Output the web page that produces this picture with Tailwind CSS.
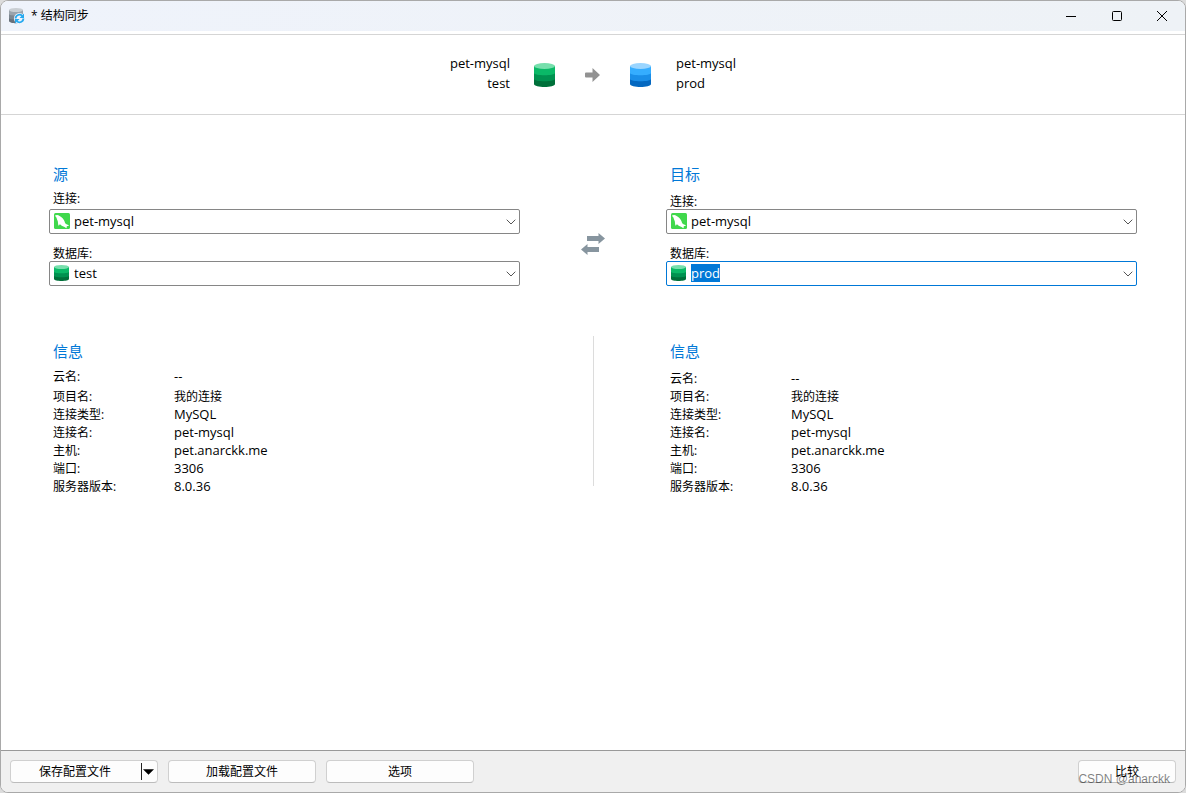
<!DOCTYPE html>
<html lang="zh-CN">
<head>
<meta charset="utf-8">
<title>结构同步</title>
<script src="https://cdn.jsdelivr.net/npm/@tailwindcss/browser@4"></script>
</head>
<body class="bg-[#dcdcdc] font-['Open_Sans','Noto_Sans_CJK_SC',sans-serif] text-[12px] leading-4 text-black">
<svg class="hidden" aria-hidden="true">
  <defs>
    <symbol id="db-green" viewBox="0 0 22 24" preserveAspectRatio="none">
      <path fill="#00703a" d="M0 16v5c0 4 22 4 22 0v-5z"/>
      <path fill="#009250" d="M0 10v6c0 3 22 3 22 0v-6z"/>
      <path fill="#0ab967" d="M0 3v7c0 3 22 3 22 0V3z"/>
      <ellipse fill="#76dfac" cx="11" cy="3" rx="11" ry="3"/>
    </symbol>
    <symbol id="db-blue" viewBox="0 0 22 24" preserveAspectRatio="none">
      <path fill="#0468c0" d="M0 16v5c0 4 22 4 22 0v-5z"/>
      <path fill="#1a8ee8" d="M0 10v6c0 3 22 3 22 0v-6z"/>
      <path fill="#35adff" d="M0 3v7c0 3 22 3 22 0V3z"/>
      <ellipse fill="#9ad5ff" cx="11" cy="3" rx="11" ry="3"/>
    </symbol>
    <symbol id="dolphin" viewBox="0 0 16 16">
      <rect width="16" height="16" rx="1.5" fill="#40d84c"/>
      <path fill="#fff" d="M1 2.6C2.200 1.600 4.200 1.700 5.600 2.900C7.800 4 9.800 6 10.500 8.200C10.900 9.800 11.500 10.600 12.400 11.300C13.500 11.800 14.800 12.200 15 12.800C14 13.100 13.300 13 12.700 13.200C13 13.800 12.800 14.500 12.300 15.200C11.200 14.400 10 13.600 8.800 13.200C7.400 12.800 6.500 12 6 11C5.600 11.800 5.200 12.400 4.600 12.800C4 11.200 4 9.600 3.800 8.200C3 6.800 2.800 5.600 2.400 4.600C1.800 4 1.200 3.400 1 2.600Z"/>
    </symbol>
    <symbol id="chevron" viewBox="0 0 10 6">
      <path fill="none" stroke="#555" stroke-width="1" d="M.7.7 5 5 9.300.7"/>
    </symbol>
  </defs>
</svg>

<div class="relative flex min-h-screen flex-col overflow-hidden rounded-lg border border-[#a9a9a9] bg-white">
  <header class="flex h-[30px] shrink-0 items-center bg-linear-to-r from-[#eff3fb] to-[#eef2f6] pl-2">
    <svg class="size-4" viewBox="0 0 16 16" aria-hidden="true">
      <path fill="#68717b" d="M0 9v4c0 3 14 3 14 0V9z"/>
      <path fill="#7d8791" d="M0 6v4c0 2 14 2 14 0V6z"/>
      <path fill="#9aa3ac" d="M0 2v4c0 2 14 2 14 0V2z"/>
      <ellipse fill="#c9ced3" cx="7" cy="2" rx="7" ry="2"/>
      <circle fill="#eff3fb" cx="10.500" cy="10.500" r="5.500"/>
      <path fill="none" stroke="#25a9ef" stroke-width="1.800" d="M6.600 10.500a3.900 3.900 0 0 1 6.600-2.700M14.400 10.500a3.900 3.900 0 0 1-6.600 2.700"/>
      <path fill="#25a9ef" d="M15 5.500v4.500h-4.500zM6 15.500v-4.500h4.500z"/>
    </svg>
    <h1 class="ml-[6px] flex-1">* 结构同步</h1>
    <button class="flex h-[30px] w-[46px] items-center justify-center" aria-label="最小化"><svg class="size-[10px]" viewBox="0 0 10 10"><path stroke="#000" d="M0 5.500h10"/></svg></button>
    <button class="flex h-[30px] w-[45px] items-center justify-center" aria-label="最大化"><svg class="size-[10px]" viewBox="0 0 10 10"><rect x=".5" y=".5" width="9" height="9" rx="1" fill="none" stroke="#000"/></svg></button>
    <button class="flex h-[30px] w-[46px] items-center justify-center" aria-label="关闭"><svg class="size-[10px]" viewBox="0 0 10 10"><path stroke="#000" d="M0 0l10 10M10 0 0 10"/></svg></button>
  </header>

  <section class="mt-[3px] grid h-[81px] shrink-0 grid-cols-[1fr_166px_1fr] items-center border-y border-[#d5d5d5] text-[13px] leading-5">
    <div class="pb-[3px] text-right"><p>pet-mysql</p><p>test</p></div>
    <div class="flex items-center justify-between pr-[25px] pl-6">
      <svg class="h-6 w-[21px]" aria-hidden="true"><use href="#db-green"/></svg>
      <svg class="h-[14px] w-[15px]" viewBox="0 0 15 14" aria-hidden="true"><path fill="#929292" d="M1 4.500h6.500V0L15 7l-7.500 7V9.500H1q-1 0-1-1v-3q0-1 1-1z"/></svg>
      <svg class="h-6 w-[21px]" aria-hidden="true"><use href="#db-blue"/></svg>
    </div>
    <div class="pb-[3px]"><p>pet-mysql</p><p>prod</p></div>
  </section>

  <main class="flex-1 px-12 pt-[47px]">
    <div class="grid grid-cols-[1fr_146px_1fr]">
      <section>
        <h2 class="ml-1 text-[15px] leading-6 text-[#0078d7]">源</h2>
        <label for="src-conn" class="mt-[5px] mb-[2px] ml-1 block">连接:</label>
        <div class="relative">
          <select id="src-conn" class="block h-[25px] w-full appearance-none rounded-xs border border-[#868686] bg-white pb-[2px] pl-6 text-[13px] outline-none"><option>pet-mysql</option></select>
          <svg class="pointer-events-none absolute top-1 left-[5px] size-4"><use href="#dolphin"/></svg>
          <svg class="pointer-events-none absolute top-[10px] right-1 h-[6px] w-[10px]"><use href="#chevron"/></svg>
        </div>
        <label for="src-db" class="mt-3 -mb-px ml-1 block">数据库:</label>
        <div class="relative">
          <input id="src-db" value="test" class="block h-[25px] w-full rounded-xs border border-[#868686] bg-white pb-[2px] pl-6 text-[13px] outline-none">
          <svg class="pointer-events-none absolute top-1 left-[5px] h-4 w-[15px]"><use href="#db-green"/></svg>
          <button class="absolute top-0 right-0 flex h-[25px] w-[18px] items-center justify-center" aria-label="展开"><svg class="h-[6px] w-[10px]"><use href="#chevron"/></svg></button>
        </div>
      </section>
      <div class="flex justify-center pt-[70px]">
        <button class="h-6 w-6" aria-label="交换">
          <svg class="size-6" viewBox="0 0 24 24"><path fill="#87959f" d="M6 4h11.500V1L24 6.500 17.500 12V9H6zM18 15H6.500v-3L0 17.500 6.500 23v-3H18z"/></svg>
        </button>
      </div>
      <section>
        <h2 class="ml-1 text-[15px] leading-6 text-[#0078d7]">目标</h2>
        <label for="dst-conn" class="mt-2 -mb-px ml-1 block">连接:</label>
        <div class="relative">
          <select id="dst-conn" class="block h-[25px] w-full appearance-none rounded-xs border border-[#868686] bg-white pb-[2px] pl-6 text-[13px] outline-none"><option>pet-mysql</option></select>
          <svg class="pointer-events-none absolute top-1 left-[5px] size-4"><use href="#dolphin"/></svg>
          <svg class="pointer-events-none absolute top-[10px] right-1 h-[6px] w-[10px]"><use href="#chevron"/></svg>
        </div>
        <label for="dst-db" class="mt-3 -mb-px ml-1 block">数据库:</label>
        <div class="relative">
          <input id="dst-db" value="prod" class="block h-[25px] w-full rounded-xs border border-[#868686] bg-white pb-[2px] pl-6 text-[13px] outline-none selection:bg-[#0078d7] selection:text-white focus:border-[#0078d7]">
          <svg class="pointer-events-none absolute top-1 left-[5px] h-4 w-[15px]"><use href="#db-green"/></svg>
          <button class="absolute top-0 right-0 flex h-[25px] w-[18px] items-center justify-center" aria-label="展开"><svg class="h-[6px] w-[10px]"><use href="#chevron"/></svg></button>
        </div>
      </section>
    </div>

    <div class="mt-[50px] grid grid-cols-[1fr_146px_1fr]">
      <section class="pt-[3px] pl-1">
        <h2 class="text-[15px] leading-6 text-[#0078d7]">信息</h2>
        <dl class="mt-[6px] grid grid-cols-[121px_1fr] gap-y-[2px]">
          <dt class="mb-[2px]">云名:</dt><dd class="text-[13px] leading-[14px]">--</dd>
          <dt>项目名:</dt><dd>我的连接</dd>
          <dt>连接类型:</dt><dd class="text-[13px] leading-[14px]">MySQL</dd>
          <dt>连接名:</dt><dd class="text-[13px] leading-[14px]">pet-mysql</dd>
          <dt>主机:</dt><dd class="text-[13px] leading-[14px]">pet.anarckk.me</dd>
          <dt>端口:</dt><dd class="text-[13px] leading-[14px]">3306</dd>
          <dt>服务器版本:</dt><dd class="text-[13px] leading-[14px]">8.0.36</dd>
        </dl>
      </section>
      <div class="mx-auto h-[150px] w-px bg-[#dcdcdc]"></div>
      <section class="pt-[3px] pl-1">
        <h2 class="text-[15px] leading-6 text-[#0078d7]">信息</h2>
        <dl class="mt-2 grid grid-cols-[121px_1fr] gap-y-[2px]">
          <dt>云名:</dt><dd class="text-[13px] leading-[14px]">--</dd>
          <dt>项目名:</dt><dd>我的连接</dd>
          <dt>连接类型:</dt><dd class="text-[13px] leading-[14px]">MySQL</dd>
          <dt>连接名:</dt><dd class="text-[13px] leading-[14px]">pet-mysql</dd>
          <dt>主机:</dt><dd class="text-[13px] leading-[14px]">pet.anarckk.me</dd>
          <dt>端口:</dt><dd class="text-[13px] leading-[14px]">3306</dd>
          <dt>服务器版本:</dt><dd class="text-[13px] leading-[14px]">8.0.36</dd>
        </dl>
      </section>
    </div>
  </main>

  <footer class="relative flex shrink-0 gap-[10px] border-t border-[#999] bg-[#f0f0f0] p-[9px]">
    <div class="flex h-[23px] w-[148px] items-center rounded-sm border border-[#d0d0d0] border-b-[#bcbcbc] bg-[#fdfdfd]">
      <button class="h-full flex-1 pr-[2px]">保存配置文件</button>
      <button class="flex h-[17px] w-4 items-center justify-center border-l border-[#222] pr-[2px]" aria-label="更多"><svg class="h-[6px] w-[11px]" viewBox="0 0 12 6"><path d="M0 0h12L6 6z"/></svg></button>
    </div>
    <button class="h-[23px] w-[148px] rounded-sm border border-[#d0d0d0] border-b-[#bcbcbc] bg-[#fdfdfd]">加载配置文件</button>
    <button class="h-[23px] w-[148px] rounded-sm border border-[#d0d0d0] border-b-[#bcbcbc] bg-[#fdfdfd]">选项</button>
    <button class="ml-auto h-[23px] w-[98px] rounded-sm border border-[#d0d0d0] border-b-[#bcbcbc] bg-[#fdfdfd]">比较</button>
    <span class="pointer-events-none absolute right-[15px] bottom-[5px] font-['Liberation_Sans',sans-serif] text-[12px] text-black/50">CSDN @anarckk</span>
  </footer>
</div>
<script>
  const target = document.getElementById('dst-db');
  target.focus();
  target.select();
</script>
</body>
</html>
